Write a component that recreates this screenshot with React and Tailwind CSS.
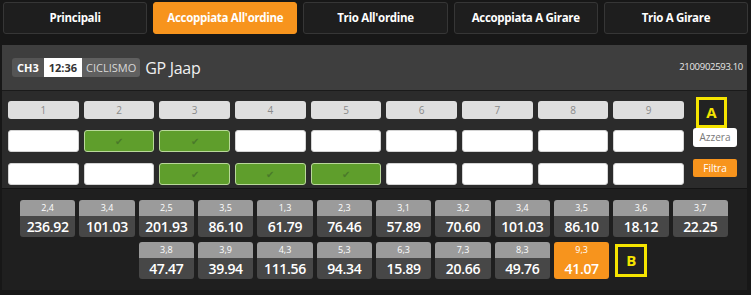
import React from "react";

const tabs = ["Principali", "Accoppiata All'ordine", "Trio All'ordine", "Accoppiata A Girare", "Trio A Girare"];
const row1 = [false, true, true, false, false, false, false, false, false];
const row2 = [false, false, true, true, true, false, false, false, false];

const odds1 = [
  ["2,4", "236.92"], ["3,4", "101.03"], ["2,5", "201.93"], ["3,5", "86.10"], ["1,3", "61.79"], ["2,3", "76.46"],
  ["3,1", "57.89"], ["3,2", "70.60"], ["3,4", "101.03"], ["3,5", "86.10"], ["3,6", "18.12"], ["3,7", "22.25"],
];
const odds2 = [
  ["3,8", "47.47"], ["3,9", "39.94"], ["4,3", "111.56"], ["5,3", "94.34"], ["6,3", "15.89"], ["7,3", "20.66"], ["8,3", "49.76"],
];

function Cell({ on }) {
  return on ? (
    <div className="h-[22px] rounded-[3px] bg-[#5f9e2c] border border-[#b9d89a] flex items-center justify-center text-[#4a7a2a] text-[10px] leading-none">✔</div>
  ) : (
    <div className="h-[22px] rounded-[3px] bg-white border border-[#d4d4d4]"></div>
  );
}

function Odd({ label, value, active }) {
  return (
    <div className="h-[37px] rounded-[3px] overflow-hidden flex flex-col">
      <div className={`h-[17px] flex items-center justify-center text-[9px] text-white ${active ? "bg-[#f7941d]" : "bg-[#9b9b9b]"}`}>{label}</div>
      <div className={`flex-1 flex items-center justify-center text-[14px] font-semibold tracking-[-0.3px] text-white ${active ? "bg-[#f7941d]" : "bg-[#474747]"}`}>{value}</div>
    </div>
  );
}

export default function App() {
  return (
    <div className="w-[751px] h-[295px] bg-[#171717] overflow-hidden" style={{ fontFamily: '"Open Sans", sans-serif' }}>
      {/* Tabs */}
      <div className="flex gap-[6px] px-[3px] pt-[2px]">
        {tabs.map((t, i) => (
          <div
            key={t}
            className={`flex-1 h-[32px] rounded-[3px] flex items-center justify-center text-[11.5px] tracking-[-0.3px] font-bold text-white ${
              i === 1 ? "bg-[#f7941d] border border-[#f7941d]" : "bg-[#1e1e1e] border border-[#363636]"
            }`}
          >
            {t}
          </div>
        ))}
      </div>

      <div className="mt-[11px] ml-[2px] w-[745px]">
        {/* Header */}
        <div className="h-[45px] bg-[#3e3e3e] flex items-center pl-[10px] pr-[4px]">
          <div className="flex h-[19px] rounded-[3px] overflow-hidden text-[11px] leading-none">
            <div className="bg-[#555555] text-white font-bold px-[5px] flex items-center">CH3</div>
            <div className="bg-white text-[#333] font-bold px-[5px] flex items-center">12:36</div>
            <div className="bg-[#606060] text-[#d8d8d8] px-[4px] flex items-center">CICLISMO</div>
          </div>
          <div className="ml-[5px] text-[16px] tracking-[-0.3px] text-[#f0f0f0]">GP Jaap</div>
          <div className="ml-auto text-[9.5px] tracking-[-0.3px] text-[#e8e8e8]">2100902593.10</div>
        </div>

        {/* Selection grid */}
        <div className="h-[98px] bg-[#2b2b2b] border-t border-[#1a1a1a] flex pl-[6px] pt-[10px]">
          <div className="w-[676px] grid grid-cols-9 gap-x-[5px]">
            {[1, 2, 3, 4, 5, 6, 7, 8, 9].map((n) => (
              <div key={n} className="h-[18px] rounded-[3px] bg-[#dedede] flex items-center justify-center text-[10px] text-[#8a8a8a]">{n}</div>
            ))}
            {row1.map((on, i) => (
              <div key={"a" + i} className="mt-[8px]"><Cell on={on} /></div>
            ))}
            {row2.map((on, i) => (
              <div key={"b" + i} className="mt-[9px]"><Cell on={on} /></div>
            ))}
          </div>
          <div className="ml-[9px] w-[44px] flex flex-col">
            <div className="-mt-[4px] ml-[3px] w-[31px] h-[31px] border-[3px] border-[#f5e400] bg-[#222] flex items-center justify-center text-[#f5e400] text-[15px] font-bold">A</div>
            <div className="w-[44px] h-[19px] rounded-[3px] bg-white text-[#777] text-[10px] flex items-center justify-center">Azzera</div>
            <div className="mt-[12px] w-[44px] h-[18px] rounded-[2px] bg-[#f7941d] text-white text-[10px] flex items-center justify-center">Filtra</div>
          </div>
        </div>

        {/* Odds */}
        <div className="h-[102px] bg-[#1f1f1f] border-t border-[#141414] pl-[18px] pt-[11px]">
          <div className="w-[708px] grid grid-cols-12 gap-x-[4px] gap-y-[5px]">
            {odds1.map(([l, v], i) => (
              <Odd key={"o" + i} label={l} value={v} />
            ))}
            <div></div>
            <div></div>
            {odds2.map(([l, v], i) => (
              <Odd key={"p" + i} label={l} value={v} />
            ))}
            <Odd label="9,3" value="41.07" active />
            <div className="flex items-center">
              <div className="ml-[2px] w-[32px] h-[33px] border-[3px] border-[#f5e400] bg-[#222] flex items-center justify-center text-[#f5e400] text-[15px] font-bold">B</div>
            </div>
          </div>
        </div>
      </div>
    </div>
  );
}
